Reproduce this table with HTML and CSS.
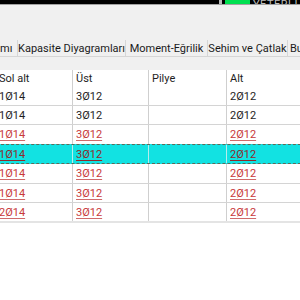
FILE: index.html
```html
<!DOCTYPE html>
<html lang="tr">
<head>
<meta charset="utf-8">
<link rel="stylesheet" href="styles.css">
</head>
<body>
<div class="topbar">
  <span class="mark"></span>
  <span class="status-ok"></span>
  <span class="status-text">YETERLİ</span>
</div>
<div class="tabs">
  <div class="tab tab-a">mı</div>
  <div class="tab tab-b">Kapasite Diyagramları</div>
  <div class="tab tab-c">Moment-Eğrilik</div>
  <div class="tab tab-d">Sehim ve Çatlak</div>
  <div class="tab tab-e">Burulma</div>
</div>
<div class="grid">
  <div class="row head">
    <div class="cell">Sol alt</div><div class="cell">Üst</div><div class="cell">Pilye</div><div class="cell">Alt</div>
  </div>
  <div class="row h19">
    <div class="cell">1Ø14</div><div class="cell">3Ø12</div><div class="cell"></div><div class="cell">2Ø12</div>
  </div>
  <div class="row h19">
    <div class="cell">1Ø14</div><div class="cell">3Ø12</div><div class="cell"></div><div class="cell">2Ø12</div>
  </div>
  <div class="row h20 err">
    <div class="cell"><u>1Ø14</u></div><div class="cell"><u>3Ø12</u></div><div class="cell"></div><div class="cell"><u>2Ø12</u></div>
  </div>
  <div class="row sel err">
    <div class="cell"><u>1Ø14</u></div><div class="cell"><u>3Ø12</u></div><div class="cell"></div><div class="cell"><u>2Ø12</u></div>
  </div>
  <div class="row h20 err">
    <div class="cell"><u>1Ø14</u></div><div class="cell"><u>3Ø12</u></div><div class="cell"></div><div class="cell"><u>2Ø12</u></div>
  </div>
  <div class="row h19 err">
    <div class="cell"><u>1Ø14</u></div><div class="cell"><u>3Ø12</u></div><div class="cell"></div><div class="cell"><u>2Ø12</u></div>
  </div>
  <div class="row last err">
    <div class="cell"><u>2Ø14</u></div><div class="cell"><u>3Ø12</u></div><div class="cell"></div><div class="cell"><u>2Ø12</u></div>
  </div>
</div>
</body>
</html>
```
FILE: styles.css
```css
* { box-sizing: border-box; }
html, body {
  margin: 0;
  padding: 0;
  width: 300px;
  height: 300px;
  overflow: hidden;
  background: #ffffff;
  font-family: Roboto, "Liberation Sans", sans-serif;
  font-size: 11px;
  color: #1e1e1e;
}

.topbar {
  height: 5px;
  background: #000;
  border-bottom: 1px solid #a2a2a2;
  display: flex;
  align-items: flex-end;
  padding-left: 219px;
  overflow: hidden;
}
.mark {
  width: 3px;
  height: 4px;
  align-self: flex-start;
  background: #b9b9b9;
  margin-right: 3px;
}
.status-ok {
  width: 25px;
  height: 4px;
  align-self: flex-start;
  background: #00e050;
  margin-right: 3px;
}
.status-text {
  color: #bdbdbd;
  font-size: 11px;
  line-height: 11px;
  height: 11px;
  margin-bottom: -6px;
  letter-spacing: 0.5px;
  white-space: nowrap;
}

.tabs {
  background: #f0f0f0;
  height: 65px;
  padding-top: 35px;
  display: flex;
  align-items: flex-start;
  white-space: nowrap;
  overflow: hidden;
}
.tab {
  flex: none;
  height: 17px;
  padding-top: 2px;
  line-height: 13px;
  border-right: 1px solid #d6d6d6;
  border-bottom: 1px solid #d6d6d6;
  text-align: center;
  color: #1a1a1a;
  overflow: hidden;
}
.tab-a { width: 18px; text-align: left; }
.tab-b { width: 108px; }
.tab-c { width: 82px; }
.tab-d { width: 80px; }
.tab-e { flex: 1; text-align: left; padding-left: 2px; border-right: 0; }

.grid {
  margin-left: -4px;
  width: 320px;
  background: #fff;
  border-bottom: 2px solid #e4e4e4;
}
.row {
  display: grid;
  grid-template-columns: 77px 76px 78px 1fr;
  border-bottom: 1px solid #d4d4d4;
}
.row.head { height: 17px; border-bottom: 0; }
.row.h19 { height: 19px; }
.row.h20 { height: 20px; }
.row.last { height: 18px; border-bottom: 0; }
.row.sel {
  height: 20px;
  margin-top: -1px;
  background: #12e2e2;
  border-top: 1px dashed #5d6a5a;
  border-bottom: 1px dashed #5d6a5a;
}
.cell {
  border-right: 1px solid #cfcfcf;
  padding-left: 3px;
  display: flex;
  align-items: center;
  white-space: nowrap;
  overflow: hidden;
}
.row.head .cell { padding-top: 0; }
.row.sel .cell { border-right-color: #b8ecec; }
.err .cell { color: #c83a3a; }
.err u {
  text-decoration: underline;
  text-decoration-color: #d06a6a;
  text-underline-offset: 2px;
}
.row.sel .cell { color: #8e2c2c; }
.row.sel u { text-decoration-color: #8e2c2c; }
```
